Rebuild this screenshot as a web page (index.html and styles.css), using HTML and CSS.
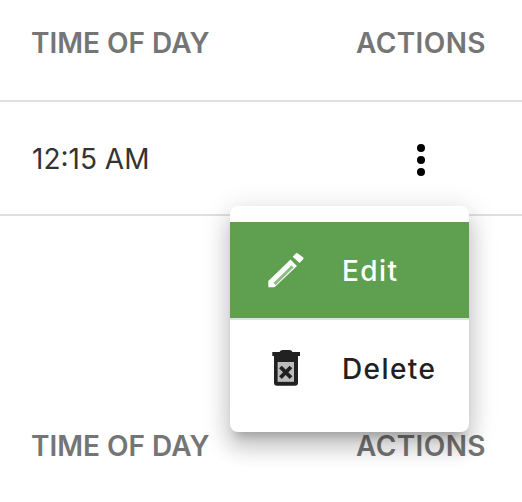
FILE: index.html
```html
<!DOCTYPE html>
<html lang="en">
<head>
<meta charset="utf-8">
<title>Schedule</title>
<link rel="stylesheet" href="styles.css">
</head>
<body>
<div class="table">
  <div class="row head top">
    <div class="time">TIME OF DAY</div>
    <div class="actions">ACTIONS</div>
  </div>
  <div class="row body">
    <div class="time">12:15 AM</div>
    <div class="actions">
      <svg class="kebab" width="8" height="32" viewBox="0 0 8 32"><circle cx="4" cy="4" r="4"/><circle cx="4" cy="16" r="4"/><circle cx="4" cy="28" r="4"/></svg>
    </div>
  </div>
  <div class="spacer"></div>
  <div class="row head foot">
    <div class="time">TIME OF DAY</div>
    <div class="actions">ACTIONS</div>
  </div>
</div>
<div class="menu">
  <div class="item selected">
    <svg class="icon" width="48" height="48" viewBox="0 0 48 48">
      <path fill="#fff" fill-rule="evenodd" d="M6.300 35 28.500 13.500 35 20 12.500 41.300H6.300zM11.500 37 13.500 39 31.500 21.500 29.500 19.500z"/>
      <path fill="#fff" fill-opacity=".3" d="M11.500 37 13.500 39 31.500 21.500 29.500 19.500z"/>
      <path fill="#fff" d="M30.700 10.700 33.800 7.500a1.500 1.500 0 0 1 2.100 0L41 11.300a1.500 1.500 0 0 1 0 2.200L37.500 17z"/>
    </svg>
    <span class="label">Edit</span>
  </div>
  <div class="item">
    <svg class="icon" width="48" height="48" viewBox="0 0 48 48">
      <path fill="#212121" fill-opacity=".3" d="M15.700 18H32v19.700H15.700z"/>
      <path fill="#212121" fill-rule="evenodd" d="M12 12h24v26.700a3 3 0 0 1-3 3H15a3 3 0 0 1-3-3zM15.700 18v19.700H32V18z"/>
      <path fill="#212121" d="M10.300 8H17.500q1-2 3-2h7q2 0 3 2h7.500v4H10.300z"/>
      <path fill="none" stroke="#212121" stroke-width="3.800" d="M18.400 23l10.600 10.600M29 23 18.400 33.600"/>
    </svg>
    <span class="label">Delete</span>
  </div>
</div>
</body>
</html>
```
FILE: styles.css
```css
html, body {
  margin: 0;
  padding: 0;
  background: #fff;
}
body {
  width: 522px;
  height: 502px;
  overflow: hidden;
  position: relative;
  font-family: "Inter", "Liberation Sans", sans-serif;
}
.table {
  display: flex;
  flex-direction: column;
}
.row {
  display: flex;
  justify-content: space-between;
  align-items: center;
  padding: 0 36px 0 32px;
}
.head {
  box-sizing: border-box;
  height: 100px;
  padding-left: 31px;
  font-size: 28px;
  font-weight: 600;
  color: #757575;
}
.head .actions {
  letter-spacing: 0.4px;
}
.top {
  height: 102px;
  padding-bottom: 15px;
  border-bottom: 2px solid #e0e0e0;
}
.body {
  height: 112px;
  border-bottom: 2px solid #e0e0e0;
  font-size: 28px;
  color: #333;
}
.body .time {
  padding-top: 1px;
}
.actions {
  width: 130px;
  display: flex;
  justify-content: center;
  white-space: nowrap;
}
.kebab {
  display: block;
  fill: #000;
  margin-top: 4px;
}
.spacer {
  height: 180px;
}
.menu {
  position: absolute;
  left: 230px;
  top: 206px;
  width: 239px;
  padding: 16px 0;
  background: #fff;
  border-radius: 8px;
  box-shadow: 0 10px 10px -6px rgba(0,0,0,.2), 0 16px 20px 2px rgba(0,0,0,.14), 0 6px 28px 4px rgba(0,0,0,.12);
}
.item {
  display: flex;
  align-items: center;
  height: 96px;
  padding-left: 32px;
  gap: 32px;
  font-size: 28px;
  font-weight: 500;
  letter-spacing: 1.4px;
  color: #212121;
}
.label {
  padding-top: 2px;
}
.selected {
  background: #5ea04f;
  color: #fff;
  border-bottom: 2px solid #e0e0e0;
}
.icon {
  display: block;
  flex: none;
}
```
